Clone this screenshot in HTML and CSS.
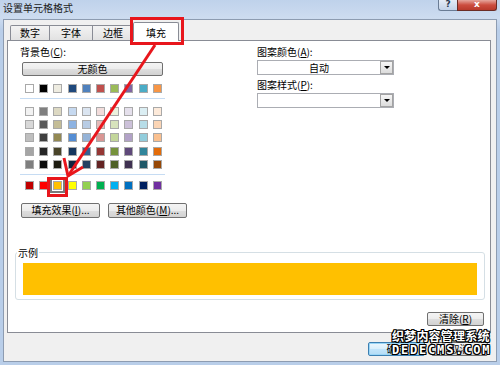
FILE: index.html
```html
<!DOCTYPE html>
<html lang="zh-CN">
<head>
<meta charset="utf-8">
<title>设置单元格格式</title>
<link rel="stylesheet" href="styles.css">
</head>
<body>
<div class="window">
  <div class="titlebar">
    <span class="title">设置单元格格式</span>
    <div class="caption-btns">
      <span class="cap-btn help">?</span>
      <span class="cap-btn close">x</span>
    </div>
  </div>
  <div class="client">
    <div class="tabs">
      <span class="tab t1">数字</span>
      <span class="tab t2">字体</span>
      <span class="tab t3">边框</span>
      <span class="tab active">填充</span>
    </div>
    <div class="panel">
      <div class="top">
        <div class="left">
          <div class="label">背景色(<u>C</u>):</div>
          <div class="btn nocolor">无颜色</div>
          <div class="swatches theme">
            <span class="sw" style="background:#ffffff"></span>
            <span class="sw" style="background:#000000"></span>
            <span class="sw" style="background:#eeece1"></span>
            <span class="sw" style="background:#1f497d"></span>
            <span class="sw" style="background:#4f81bd"></span>
            <span class="sw" style="background:#c0504d"></span>
            <span class="sw" style="background:#9bbb59"></span>
            <span class="sw" style="background:#8064a2"></span>
            <span class="sw" style="background:#4bacc6"></span>
            <span class="sw" style="background:#f79646"></span>
          </div>
          <div class="sep"></div>
          <div class="swatches tints">
            <span class="sw" style="background:#f2f2f2"></span>
            <span class="sw" style="background:#7f7f7f"></span>
            <span class="sw" style="background:#ddd9c3"></span>
            <span class="sw" style="background:#c6d9f0"></span>
            <span class="sw" style="background:#dbe5f1"></span>
            <span class="sw" style="background:#f2dcdb"></span>
            <span class="sw" style="background:#ebf1dd"></span>
            <span class="sw" style="background:#e5e0ec"></span>
            <span class="sw" style="background:#dbeef3"></span>
            <span class="sw" style="background:#fdeada"></span>
            <span class="sw" style="background:#d8d8d8"></span>
            <span class="sw" style="background:#595959"></span>
            <span class="sw" style="background:#c4bd97"></span>
            <span class="sw" style="background:#8db3e2"></span>
            <span class="sw" style="background:#b8cce4"></span>
            <span class="sw" style="background:#e5b9b7"></span>
            <span class="sw" style="background:#d7e3bc"></span>
            <span class="sw" style="background:#ccc1d9"></span>
            <span class="sw" style="background:#b7dde8"></span>
            <span class="sw" style="background:#fbd5b5"></span>
            <span class="sw" style="background:#bfbfbf"></span>
            <span class="sw" style="background:#3f3f3f"></span>
            <span class="sw" style="background:#938953"></span>
            <span class="sw" style="background:#548dd4"></span>
            <span class="sw" style="background:#95b3d7"></span>
            <span class="sw" style="background:#d99694"></span>
            <span class="sw" style="background:#c3d69b"></span>
            <span class="sw" style="background:#b2a2c7"></span>
            <span class="sw" style="background:#92cddc"></span>
            <span class="sw" style="background:#fac08f"></span>
            <span class="sw" style="background:#a5a5a5"></span>
            <span class="sw" style="background:#262626"></span>
            <span class="sw" style="background:#494429"></span>
            <span class="sw" style="background:#17365d"></span>
            <span class="sw" style="background:#366092"></span>
            <span class="sw" style="background:#953734"></span>
            <span class="sw" style="background:#76923c"></span>
            <span class="sw" style="background:#5f497a"></span>
            <span class="sw" style="background:#31859b"></span>
            <span class="sw" style="background:#e36c09"></span>
            <span class="sw" style="background:#7f7f7f"></span>
            <span class="sw" style="background:#0c0c0c"></span>
            <span class="sw" style="background:#1d1b10"></span>
            <span class="sw" style="background:#0f243e"></span>
            <span class="sw" style="background:#244061"></span>
            <span class="sw" style="background:#632423"></span>
            <span class="sw" style="background:#4f6128"></span>
            <span class="sw" style="background:#3f3151"></span>
            <span class="sw" style="background:#205867"></span>
            <span class="sw" style="background:#974806"></span>
          </div>
          <div class="sep"></div>
          <div class="swatches standard">
            <span class="sw" style="background:#c00000"></span>
            <span class="sw" style="background:#ff0000"></span>
            <span class="sw sel" style="background:#ffc000"></span>
            <span class="sw" style="background:#ffff00"></span>
            <span class="sw" style="background:#92d050"></span>
            <span class="sw" style="background:#00b050"></span>
            <span class="sw" style="background:#00b0f0"></span>
            <span class="sw" style="background:#0070c0"></span>
            <span class="sw" style="background:#002060"></span>
            <span class="sw" style="background:#7030a0"></span>
          </div>
          <div class="btn-row">
            <span class="btn wide">填充效果(<u>I</u>)...</span>
            <span class="btn wide">其他颜色(<u>M</u>)...</span>
          </div>
        </div>
        <div class="right">
          <div class="label">图案颜色(<u>A</u>):</div>
          <div class="combo"><span class="combo-text">自动</span><span class="drop"></span></div>
          <div class="label label2">图案样式(<u>P</u>):</div>
          <div class="combo"><span class="combo-text"></span><span class="drop"></span></div>
        </div>
      </div>
      <fieldset class="sample">
        <legend>示例</legend>
        <div class="fill"></div>
      </fieldset>
      <div class="clear-row"><span class="btn clear">清除(<u>R</u>)</span></div>
    </div>
    <div class="footer">
      <span class="btn ok">确定</span>
      <span class="btn cancel">取消</span>
    </div>
  </div>
</div>
<svg class="annot" width="500" height="365" viewBox="0 0 500 365">
  <rect x="131.5" y="18.5" width="51" height="25" fill="none" stroke="#e8161c" stroke-width="3"/>
  <rect x="48.5" y="178.5" width="18" height="17" fill="none" stroke="#e8161c" stroke-width="3"/>
  <line x1="155" y1="45" x2="68" y2="176" stroke="#e8161c" stroke-width="3"/>
  <polyline points="64,158 68,176 83,167" fill="none" stroke="#e8161c" stroke-width="3" stroke-linejoin="miter"/>
</svg>
<div class="watermark">
  <div class="wm1">织梦内容管理系统</div>
  <div class="wm2">DEDECMS.COM</div>
</div>
</body>
</html>
```
FILE: styles.css
```css
* { box-sizing: border-box; }
html, body { margin: 0; padding: 0; }
body {
  width: 500px;
  height: 365px;
  overflow: hidden;
  position: relative;
  background: #b9cee9;
  font-family: "Noto Sans CJK SC", "Microsoft YaHei", sans-serif;
  font-size: 10px;
  color: #000;
}
u { text-decoration: underline; }

.window {
  display: flex;
  flex-direction: column;
  height: 365px;
  padding: 0 3px 3px 3px;
  background: linear-gradient(#bfd2eb, #cddcf0 18px, #b9cee9 30px);
}
.titlebar {
  height: 19px;
  display: flex;
  justify-content: space-between;
  align-items: flex-start;
}
.title {
  line-height: 12px;
  margin-top: 2px;
  color: #1c1c1c;
}
.caption-btns { display: flex; }
.cap-btn {
  display: block;
  height: 11px;
  text-align: center;
  font-family: "DejaVu Sans", sans-serif;
  font-weight: bold;
  font-size: 9px;
  line-height: 9px;
  border: 1px solid #6a7c95;
  border-top: none;
}
.help {
  width: 19px;
  color: #2a3b52;
  background: linear-gradient(#e4ecf6, #c3d3e8);
  border-radius: 0 0 0 3px;
  border-right: none;
}
.close {
  width: 40px;
  color: #fff;
  background: linear-gradient(#e6a79e, #cc4d3f 50%, #b83a2c);
  border-color: #6b2c25;
  border-radius: 0 0 3px 0;
}

.client {
  flex: 1;
  display: flex;
  flex-direction: column;
  background: #f0f0f0;
  border: 1px solid #8d9cb1;
}
.tabs {
  height: 20px;
  display: flex;
  align-items: flex-end;
  padding-left: 6px;
}
.tab {
  display: block;
  height: 15px;
  padding-top: 1px;
  line-height: 12px;
  text-align: center;
  border: 1px solid #898c95;
  border-bottom: none;
  background: linear-gradient(#f3f3f3, #e2e2e2);
  margin-left: -1px;
}
.t1 { width: 40px; margin-left: 0; border-radius: 2px 0 0 0; }
.t2 { width: 44px; }
.t3 { width: 42px; }
.active {
  width: 46px;
  height: 19px;
  padding-top: 4px;
  margin-bottom: -1px;
  background: #fff;
  position: relative;
  z-index: 1;
  border-radius: 2px 2px 0 0;
}

.panel {
  margin: 0 5px 0 3px;
  height: 293px;
  background: #fff;
  border: 1px solid #898c95;
  padding: 5px 5px 0 7px;
}
.top { display: flex; }
.left { width: 237px; margin-left: 5px; }
.right { width: 137px; }
.label { height: 12px; line-height: 12px; }
.label2 { margin-top: 4px; }

.btn {
  display: block;
  text-align: center;
  line-height: 12px;
  border: 1px solid #707070;
  border-radius: 2px;
  background: linear-gradient(#f4f4f4 0%, #ececec 50%, #dedede 51%, #d2d2d2 100%);
}
.nocolor {
  width: 141px;
  height: 14px;
  margin: 4px 0 0 2px;
}
.swatches {
  display: grid;
  grid-template-columns: repeat(10, 9px);
  grid-auto-rows: 9px;
  column-gap: 5.2px;
  row-gap: 4.33px;
  margin-left: 5px;
}
.sw {
  display: block;
  width: 9px;
  height: 9px;
  border: 1px solid #a9a9a9;
}
.theme { margin-top: 8px; }
.sep {
  width: 145px;
  height: 1px;
  background: #c6dcf3;
  margin-top: 5px;
}
.tints { margin-top: 7.7px; }
.standard { margin-top: 5.7px; }
.sel {
  box-shadow: 0 0 0 1px #fff, 0 0 0 3px #7a7a7a;
}
.btn-row {
  display: flex;
  gap: 8px;
  margin: 13.6px 0 0 1px;
}
.wide { width: 79px; height: 15px; }

.combo {
  display: flex;
  width: 137px;
  height: 15px;
  margin-top: 2px;
  border: 1px solid #abadb3;
  background: #fff;
}
.combo-text {
  flex: 1;
  text-align: center;
  line-height: 13px;
}
.drop {
  width: 13px;
  height: 13px;
  border: 1px solid #a3a3a3;
  background: linear-gradient(#f6f6f6, #dcdcdc);
  display: flex;
  align-items: center;
  justify-content: center;
}
.drop::after {
  content: "";
  border-left: 3px solid transparent;
  border-right: 3px solid transparent;
  border-top: 3px solid #000;
}

.sample {
  margin: 28.7px 0 0 0;
  padding: 4px 7px 4px 7px;
  border: 1px solid #d5dfe5;
  border-radius: 3px;
  min-width: 0;
}
.sample legend {
  padding: 0 1px;
  margin-left: -6px;
  line-height: 12px;
  font-size: 10px;
}
.fill {
  height: 32px;
  background: #ffc000;
}
.clear-row {
  display: flex;
  justify-content: flex-end;
  margin-top: 12px;
  padding-right: 1px;
}
.clear { width: 57px; height: 14px; }

.footer {
  display: flex;
  justify-content: flex-end;
  gap: 6px;
  padding: 9px 8px 0 0;
}
.ok, .cancel { width: 57px; height: 14px; }
.ok {
  border-color: #3c7fb1;
  box-shadow: inset 0 0 0 1px #9ad6f7;
  background: linear-gradient(#eef7fd, #d8effc 50%, #c2e5fb 51%, #b4dcf5);
}

.annot {
  position: absolute;
  left: 0;
  top: 0;
  pointer-events: none;
}
.watermark {
  position: absolute;
  left: 392px;
  top: 328px;
  color: #fff;
  font-weight: bold;
  text-shadow: 1px 0 0 #000, -1px 0 0 #000, 0 1px 0 #000, 0 -1px 0 #000,
               1px 1px 0 #000, -1px -1px 0 #000, 1px -1px 0 #000, -1px 1px 0 #000;
}
.wm1 {
  font-size: 12px;
  line-height: 16px;
  letter-spacing: 0.2px;
}
.wm2 {
  font-family: "DejaVu Sans Mono", monospace;
  font-size: 12px;
  line-height: 13px;
  letter-spacing: 1.8px;
}
```
